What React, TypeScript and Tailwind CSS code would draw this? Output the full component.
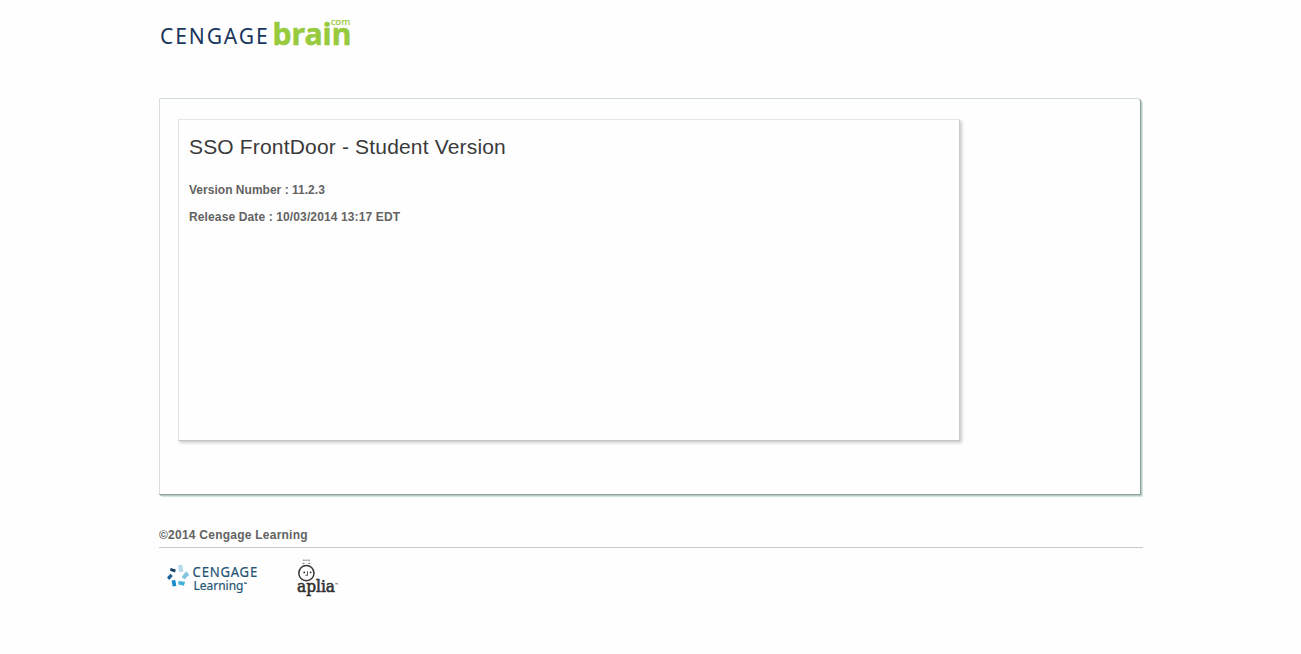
function BrainLogo() {
  return (
    <svg className="block" width="200" height="40" viewBox="155 12 200 40" role="img" aria-label="CengageBrain.com">
      <text x="0" y="0" transform="translate(160 44.3) scale(.94 1)" textLength="114.5" fill="#17365d" fontSize="22.4" fontFamily="'Noto Sans', 'Open Sans', sans-serif" lengthAdjust="spacing">CENGAGE</text>
      <text x="272.4" y="44.6" textLength="79" lengthAdjust="spacingAndGlyphs" fill="#97ca3d" stroke="#97ca3d" strokeWidth="0.5" fontSize="29.5" fontWeight="700" fontFamily="'Noto Sans', 'Open Sans', sans-serif">brain</text>
      <text x="330.7" y="25" textLength="19.5" lengthAdjust="spacingAndGlyphs" fill="#97ca3d" stroke="#97ca3d" strokeWidth=".2" fontSize="9.8" fontFamily="'Noto Sans', sans-serif">com</text>
    </svg>
  );
}

function LearningLogo() {
  return (
    <svg className="block" width="110" height="45" viewBox="155 555 110 45" role="img" aria-label="Cengage Learning">
      <path d="M178.1 565.3l4.4-.5.8 6.8-4.1.7z" fill="#b5dcea" />
      <path d="M170.5 568.1l5.2 1.3-.6 3.2-5-1.8z" fill="#163f63" />
      <path d="M167 577.5l3.4-3.8 2.4 2.4-3.6 3.8z" fill="#1c5f93" />
      <path d="M171.6 580.5l3.7-.4 1 5.8-3.6.5z" fill="#168acb" />
      <path d="M178.3 581l6.8.8-1.2 3.9-5.5-1.3z" fill="#42b4dc" />
      <path d="M181.6 577l4.5-5.7 3.3 3.4-5 4.8z" fill="#85c5e0" />
      <g fill="#245476" stroke="#245476" strokeWidth="0.2" fontFamily="'Noto Sans', 'Open Sans', sans-serif">
        <text x="0" y="0" transform="translate(192.6 577) scale(.95 1)" textLength="68" lengthAdjust="spacing" fontSize="13.8">CENGAGE</text>
        <text x="193.5" y="589.8" textLength="50" lengthAdjust="spacingAndGlyphs" fontSize="12.8">Learning</text>
        <text x="244" y="585" fontSize="3.5">™</text>
      </g>
    </svg>
  );
}

function ApliaLogo() {
  return (
    <svg className="block" width="65" height="50" viewBox="285 552 65 50" role="img" aria-label="Aplia">
      <g fill="none" stroke="#353535">
        <circle cx="306.4" cy="573.2" r="7.6" strokeWidth="1.5" />
        <path d="M303 560.2h1.8M305.5 560.2h1.8M308 560.2h1.8M302.5 563.4h2M308.3 563.4h2" strokeWidth=".9" opacity=".8" />
        <path d="M307.5 571.2v4.2h-2" strokeWidth=".8" />
      </g>
      <circle cx="304.2" cy="572.4" r=".9" fill="#303030" />
      <circle cx="310.6" cy="572.4" r=".9" fill="#303030" />
      <text x="297" y="592" textLength="38" lengthAdjust="spacingAndGlyphs" fill="#303030" stroke="#303030" strokeWidth=".6" fontSize="16.5" fontFamily="'DejaVu Serif', serif">aplia</text>
      <text x="335" y="586" fontSize="4" fill="#303030" fontFamily="'Noto Sans', sans-serif">™</text>
    </svg>
  );
}

export default function App() {
  return (
    <div className="min-h-screen bg-[#fefefe] pt-3 font-['Liberation_Sans',Arial,sans-serif] text-[#636363]">
      <div className="ml-[159px] w-[984px]">
        <header className="-ml-1 h-[86px]">
          <BrainLogo />
        </header>
        <main className="mr-[2px] h-[397px] rounded-tr-[4px] border border-t-[#cddad6] border-r-[#8fa09e] border-b-[#8fa09e] border-l-[#dcdcdc] pt-5 pl-[18px] shadow-[1px_1px_0_#bacbc8,2px_2px_0_#d6e5e1]">
          <section className="h-[322px] w-[782px] border border-t-[#e6e6e6] border-r-[#c9c9c9] border-b-[#c4c4c4] border-l-[#e6e6e6] px-[10px] shadow-[2px_2px_3px_#cccccc]">
            <h1 className="pt-[15px] text-[21px] leading-6 tracking-[0.17px] text-[#3a3a3a]">SSO FrontDoor - Student Version</h1>
            <p className="mt-6 text-xs leading-[14px] font-bold tracking-[0.02px]">Version Number : 11.2.3</p>
            <p className="mt-[13px] text-xs leading-[14px] font-bold tracking-[0.125px]">Release Date : 10/03/2014 13:17 EDT</p>
          </section>
        </main>
        <footer className="pt-[33px]">
          <p className="h-5 border-b border-[#c9c9c9] text-xs leading-[14px] font-bold tracking-[0.24px]">©2014 Cengage Learning</p>
          <div className="flex items-start">
            <div className="-ml-1 pt-[7px]"><LearningLogo /></div>
            <div className="ml-5 pt-1"><ApliaLogo /></div>
          </div>
        </footer>
      </div>
    </div>
  );
}
